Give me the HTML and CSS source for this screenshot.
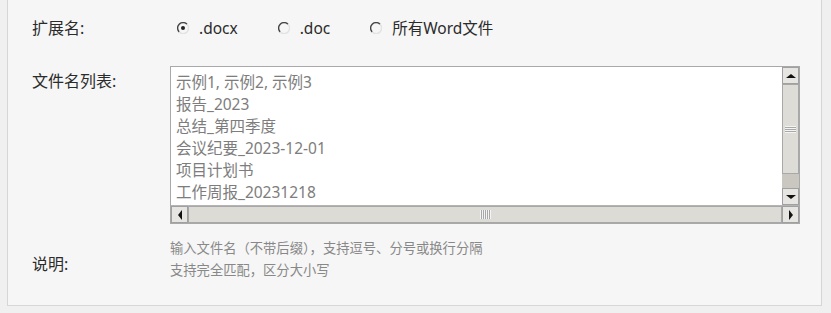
FILE: index.html
```html
<!DOCTYPE html>
<html lang="zh-CN">
<head>
<meta charset="UTF-8">
<title>文件名筛选</title>
<link rel="stylesheet" href="styles.css">
</head>
<body>
<div class="panel">
  <div class="row row-ext">
    <div class="label">扩展名:</div>
    <div class="radios">
      <label class="radio">
        <svg width="12" height="12" viewBox="0 0 12 12"><path d="M10 2.2A5 5 0 1 0 2.2 10" fill="none" stroke="#444" stroke-width="1.4"/><path d="M2.2 10A5 5 0 0 0 10 2.2" fill="none" stroke="#e2e2e2" stroke-width="1.4"/><circle cx="6" cy="6" r="2" fill="#222"/></svg>
        <span>.docx</span>
      </label>
      <label class="radio">
        <svg width="12" height="12" viewBox="0 0 12 12"><path d="M10 2.2A5 5 0 1 0 2.2 10" fill="none" stroke="#444" stroke-width="1.4"/><path d="M2.2 10A5 5 0 0 0 10 2.2" fill="none" stroke="#e2e2e2" stroke-width="1.4"/></svg>
        <span>.doc</span>
      </label>
      <label class="radio">
        <svg width="12" height="12" viewBox="0 0 12 12"><path d="M10 2.2A5 5 0 1 0 2.2 10" fill="none" stroke="#444" stroke-width="1.4"/><path d="M2.2 10A5 5 0 0 0 10 2.2" fill="none" stroke="#e2e2e2" stroke-width="1.4"/></svg>
        <span>所有Word文件</span>
      </label>
    </div>
  </div>

  <div class="row row-list">
    <div class="label">文件名列表:</div>
    <div class="textbox">
      <div class="textbox-main">
        <div class="text-lines">
          <div>示例1, 示例2, 示例3</div>
          <div>报告_2023</div>
          <div>总结_第四季度</div>
          <div>会议纪要_2023-12-01</div>
          <div>项目计划书</div>
          <div>工作周报_20231218</div>
        </div>
        <div class="vscroll">
          <div class="sbtn"><span class="tri tri-up"></span></div>
          <div class="vthumb"><span class="grip-h"></span></div>
          <div class="vtrack"></div>
          <div class="sbtn"><span class="tri tri-down"></span></div>
        </div>
      </div>
      <div class="hscroll">
        <div class="sbtn"><span class="tri tri-left"></span></div>
        <div class="hthumb"><span class="grip-v"></span></div>
        <div class="sbtn"><span class="tri tri-right"></span></div>
      </div>
    </div>
  </div>

  <div class="row row-note">
    <div class="label label-note">说明:</div>
    <div class="note">
      <div>输入文件名（不带后缀），支持逗号、分号或换行分隔</div>
      <div>支持完全匹配，区分大小写</div>
    </div>
  </div>
</div>
</body>
</html>
```

FILE: styles.css
```css
body {
  margin: 0;
  padding: 0 9px 7px 7px;
  background-color: #f0f0f0;
  font-family: "Noto Sans", "Noto Sans CJK SC", sans-serif;
  color: #333;
}
.panel {
  background-color: #f6f6f6;
  border: 1px solid #d6d6d6;
  border-top: none;
  padding: 17px 21px 24px 24px;
}
.row {
  display: grid;
  grid-template-columns: 138px 1fr;
}
.label {
  font-size: 16px;
  line-height: 22px;
  color: #2b2b2b;
}
.row-list {
  margin-top: 27px;
}
.row-list .label {
  padding-top: 4px;
}
.row-note {
  margin-top: 13px;
}
.label-note {
  padding-top: 16px;
}
.radios {
  display: flex;
  align-items: center;
  gap: 40px;
  padding-left: 7px;
}
.radio {
  display: flex;
  align-items: center;
  gap: 10px;
  font-size: 15.5px;
  line-height: 22px;
  color: #2b2b2b;
}
.textbox {
  border: 1px solid #a9a9a9;
  background-color: #fff;
  height: 156px;
  display: flex;
  flex-direction: column;
}
.textbox-main {
  flex: 1;
  display: flex;
  min-height: 0;
}
.text-lines {
  flex: 1;
  padding: 4px 5px;
  font-size: 15.5px;
  line-height: 22px;
  color: #7d7d7d;
  white-space: nowrap;
}
.vscroll {
  width: 17px;
  display: flex;
  flex-direction: column;
  background-color: #c9c7c0;
}
.sbtn {
  width: 17px;
  height: 17px;
  box-sizing: border-box;
  background-color: #e6e5e1;
  border: 1px solid #a0a0a0;
  display: flex;
  align-items: center;
  justify-content: center;
  flex-shrink: 0;
}
.vthumb {
  height: 90px;
  box-sizing: border-box;
  background-color: #dddcd7;
  border: 1px solid #a8a8a8;
  display: flex;
  align-items: center;
  justify-content: center;
}
.vtrack {
  flex: 1;
}
.hscroll {
  height: 17px;
  display: flex;
  background-color: #dcdbd6;
  border-top: 1px solid #b4b4b4;
}
.hthumb {
  flex: 1;
  box-sizing: border-box;
  background-color: #dcdbd6;
  border: 1px solid #a8a8a8;
  display: flex;
  align-items: center;
  justify-content: center;
}
.grip-h {
  width: 11px;
  height: 7px;
  background: repeating-linear-gradient(#f4f4f4 0 1px, #a8a8a8 1px 2px);
}
.grip-v {
  width: 11px;
  height: 9px;
  background: repeating-linear-gradient(90deg, #f4f4f4 0 1px, #a8a8a8 1px 2px);
}
.tri {
  width: 0;
  height: 0;
  border: 4px solid transparent;
}
.tri-up {
  border-bottom: 4px solid #111;
  border-top-width: 0;
  border-left-width: 5px;
  border-right-width: 5px;
}
.tri-down {
  border-top: 4px solid #111;
  border-bottom-width: 0;
  border-left-width: 5px;
  border-right-width: 5px;
}
.tri-left {
  border-right: 4px solid #111;
  border-left-width: 0;
  border-top-width: 5px;
  border-bottom-width: 5px;
}
.tri-right {
  border-left: 4px solid #111;
  border-right-width: 0;
  border-top-width: 5px;
  border-bottom-width: 5px;
}
.note {
  font-size: 13.3px;
  line-height: 22px;
  color: #888;
}
```
